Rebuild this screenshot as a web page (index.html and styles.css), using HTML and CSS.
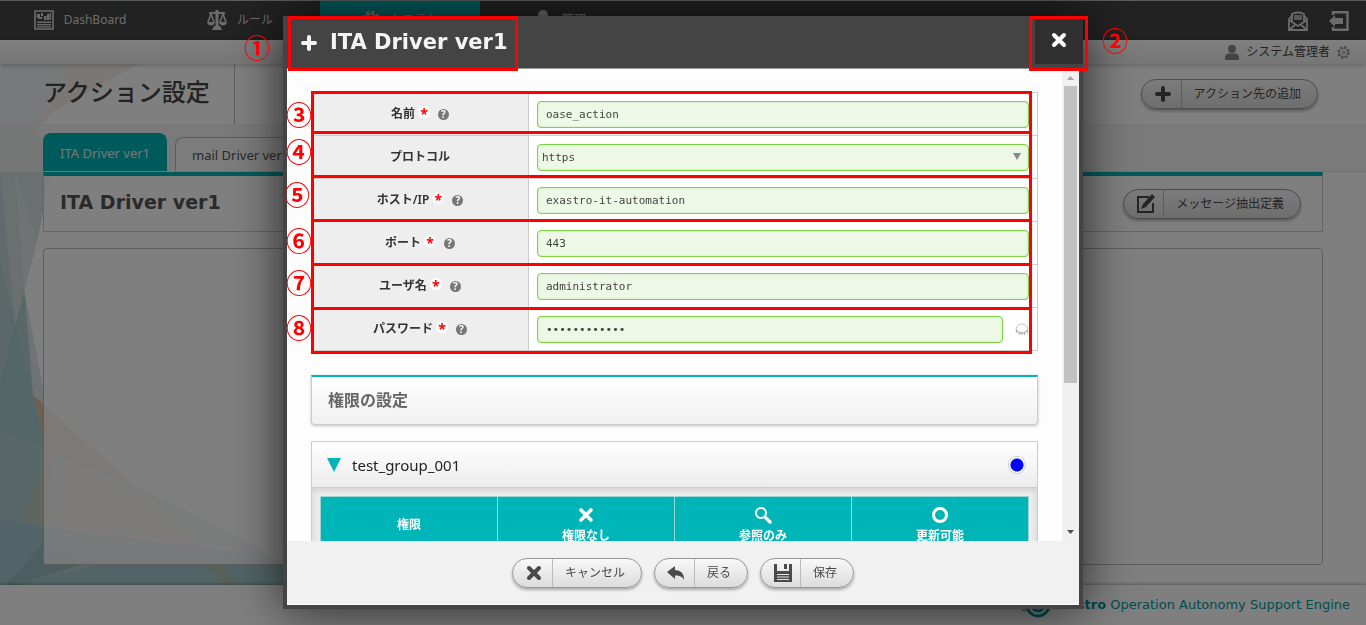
FILE: index.html
```html
<!DOCTYPE html>
<html lang="ja">
<head>
<meta charset="utf-8">
<title>アクション設定</title>
<link rel="stylesheet" href="styles.css">
</head>
<body>
<svg class="backdrop" viewBox="0 0 300 585" width="300" height="585" aria-hidden="true">
  <path fill="#eef4f4" d="M0 64h62v38L0 172z"/>
  <path fill="#f7eee8" d="M62 64h76l-40 22-65 38 30-35z"/>
  <path fill="#e9efef" d="M0 124h33l22 48H0z"/>
  <path fill="#b3ced2" d="M0 172h51L37 240l-13 50 20 105v170h239l17 6v14H0z"/>
  <path fill="#d4dfe1" d="M0 172h51L37 240 0 385z"/>
  <path fill="#dfe7e9" d="M15 172l22 68-13 50 20 105v54l-11-54z"/>
  <path fill="#b4cfd3" d="M0 262l15 58L0 385z"/>
  <path fill="#b8cfd3" d="M0 172l15 150-15 63z" opacity=".6"/>
  <path fill="#a6cfd1" d="M15 322l18 73 11 42v12L0 430v-45z"/>
  <path fill="#ddc0a0" d="M33 395l125 112 52 42 20 16H44V437z"/>
  <path fill="#b1cfd5" d="M0 430l44 19v16l-22 57-22-4z"/>
  <path fill="#bdcdbf" d="M44 465v62l-22-5z"/>
  <path fill="#c8dcdc" d="M55 455l90 35 155 80v15H44z"/>
  <path fill="#dcd2c4" d="M65 458l90 47 55 50-150-28z"/>
  <path fill="#a4c9ce" d="M0 518l44 10 190 23 66 14v20H0z"/>
  <path fill="#98bfc0" d="M44 543L5 585h15l80-24z"/>
  <path fill="#bfd3c8" d="M15 585l85-26 50-8z" opacity=".7"/>
  <path fill="#adc2b8" d="M206 565h16l20 20h-23z"/>
</svg>

<header class="topnav">
  <nav class="topnav-menu">
    <a class="topnav-item" href="#dashboard">
      <svg width="20" height="20" viewBox="0 0 20 20"><path fill="none" stroke="currentColor" stroke-width="1.6" d="M1 1h18v18H1z"/><path fill="currentColor" d="M3 4h3v3h3A3 3 0 1 1 3 4zM7 3h2v3H7zM10 6h2.500v4H10zM13 4h2v6h-2zM15.500 3H17v7h-1.500zM3 11.500h14v1.500H3zM3 14h14v1.300H3zM3 16.300h14v1.200H3z"/></svg>
      <span>DashBoard</span>
    </a>
    <a class="topnav-item" href="#rule">
      <svg width="20" height="20" viewBox="0 0 20 20"><g fill="none" stroke="currentColor" stroke-width="1.600"><path stroke-width="2.200" d="M2 3.500q4-1.500 8 0 4-1.500 8 0"/><path d="M4 4L1 12M4 4l3 8M16 4l-3 8M16 4l3 8"/><path stroke-width="3" d="M10 0v17"/></g><path fill="currentColor" d="M0 12h8q-1 3.500-4 3.500T0 12zM12 12h8q-1 3.500-4 3.500T12 12zM7 16h6l2 4H5z"/></svg>
      <span>ルール</span>
    </a>
    <a class="topnav-item topnav-active" href="#system">
      <svg width="18" height="20" viewBox="0 0 18 20"><circle cx="9" cy="9" r="7" fill="none" stroke="currentColor" stroke-width="3" stroke-dasharray="3.500 2"/><circle cx="9" cy="9" r="5" fill="none" stroke="currentColor" stroke-width="2"/></svg>
      <span>システム</span>
    </a>
    <a class="topnav-item" href="#admin">
      <svg width="18" height="20" viewBox="0 0 18 20"><circle cx="9" cy="5" r="5" fill="currentColor"/><path fill="currentColor" d="M0 20v-4q0-5 9-5t9 5v4z"/></svg>
      <span>管理</span>
    </a>
  </nav>
  <div class="topnav-tools">
    <a href="#mail" aria-label="メール"><svg width="20" height="20" viewBox="0 0 20 20"><g fill="none" stroke="currentColor" stroke-width="1.800"><path d="M4 5L1 8v11h18V8l-3-3"/><path d="M4 11V3q6-3 12 0v8M1 9l9 6 9-6M1 19l7-6M19 19l-7-6"/></g><path fill="currentColor" opacity=".7" d="M6 4h8v5H6z"/></svg></a>
    <a href="#logout" aria-label="ログアウト"><svg width="20" height="20" viewBox="0 0 20 20"><path fill="none" stroke="currentColor" stroke-width="2.400" d="M4 4V1.200h14.500v17.600H4V16"/><path fill="currentColor" d="M0 10l6-6v3h8v6H6v3z"/></svg></a>
  </div>
</header>

<div class="userbar">
  <svg width="14" height="15" viewBox="0 0 14 15"><circle cx="7" cy="4" r="4" fill="#888"/><path fill="#888" d="M0 15v-3q0-3 4-3.500h6q4 .5 4 3.500v3z"/></svg>
  <a href="#user">システム管理者</a>
  <svg width="13" height="13" viewBox="0 0 13 13"><circle cx="6.500" cy="6.500" r="5.500" fill="none" stroke="#888" stroke-width="1.500" stroke-dasharray="2.300 2"/><circle cx="6.500" cy="6.500" r="4.300" fill="none" stroke="#888"/><circle cx="6.500" cy="6.500" r="1.500" fill="none" stroke="#888"/></svg>
</div>

<div class="titlebar">
  <h1>アクション設定</h1>
  <button class="pill" type="button">
    <span class="pill-icon"><svg width="18" height="18" viewBox="0 0 18 18"><path stroke="currentColor" stroke-width="4" stroke-linecap="round" d="M9 3v12M3 9h12"/></svg></span>
    <span class="pill-text">アクション先の追加</span>
  </button>
</div>

<nav class="tabs">
  <a class="tab tab-active" href="#ita">ITA Driver ver1</a>
  <a class="tab" href="#mail-driver">mail Driver ver1</a>
</nav>

<main class="main">
  <section class="driver-head">
    <h2>ITA Driver ver1</h2>
    <button class="pill" type="button">
      <span class="pill-icon"><svg width="20" height="20" viewBox="0 0 20 20"><path fill="none" stroke="currentColor" stroke-width="2" d="M13 3H2v15h15V9"/><path fill="currentColor" d="M16 0l3 3-9 10-5 2 2-5z"/></svg></span>
      <span class="pill-text">メッセージ抽出定義</span>
    </button>
  </section>
  <section class="driver-panel"></section>
</main>

<footer class="footer">
  <svg width="34" height="30" viewBox="0 0 34 30"><g fill="none" stroke="currentColor" stroke-width="3"><circle cx="21" cy="15" r="11"/><circle cx="21" cy="15" r="6"/></g><circle cx="7" cy="19" r="2" fill="none" stroke="currentColor"/></svg>
  <p><strong>Exastro</strong> Operation Autonomy Support Engine</p>
</footer>

<div class="overlay">
  <div class="modal" role="dialog" aria-labelledby="modal-title">
    <header class="modal-head">
      <h2 id="modal-title">
        <svg width="18" height="18" viewBox="0 0 18 18"><path stroke="currentColor" stroke-width="4" stroke-linecap="round" d="M9 3v12M3 9h12"/></svg>
        ITA Driver ver1
      </h2>
      <button class="modal-close" type="button" aria-label="閉じる"><svg width="18" height="18" viewBox="0 0 18 18"><path stroke="currentColor" stroke-width="4" stroke-linecap="round" d="M4 4l10 10M14 4L4 14"/></svg></button>
    </header>

    <div class="modal-body">
      <div class="modal-content">
        <table class="form-table">
          <tr><th><label for="f-name">名前</label><i class="req">*</i><i class="help">?</i></th><td><input id="f-name" type="text" value="oase_action"></td></tr>
          <tr><th><label for="f-protocol">プロトコル</label></th><td><div class="select-wrap"><select id="f-protocol"><option>https</option></select></div></td></tr>
          <tr><th><label for="f-host">ホスト/IP</label><i class="req">*</i><i class="help">?</i></th><td><input id="f-host" type="text" value="exastro-it-automation"></td></tr>
          <tr><th><label for="f-port">ポート</label><i class="req">*</i><i class="help">?</i></th><td><input id="f-port" type="text" value="443"></td></tr>
          <tr><th><label for="f-user">ユーザ名</label><i class="req">*</i><i class="help">?</i></th><td><input id="f-user" type="text" value="administrator"></td></tr>
          <tr><th><label for="f-pass">パスワード</label><i class="req">*</i><i class="help">?</i></th><td><div class="pass-row"><input id="f-pass" type="password" value="password1234"><svg width="14" height="12" viewBox="0 0 14 12"><path fill="none" stroke="#c4c4c4" d="M1 6q1-5 6-5t6 5"/><path fill="none" stroke="#b4b4b4" stroke-width="1.300" d="M1 6q2 4 6 4t6-4M2 8L1 10M5 9.500L4 12M7 10v2M9 9.500l1 2.500M12 8l1 2"/></svg></div></td></tr>
        </table>

        <h3 class="section-title">権限の設定</h3>

        <section class="group">
          <div class="group-head">
            <svg width="14" height="14" viewBox="0 0 14 14"><path fill="#00b5b8" d="M0 0h14L7 14z"/></svg>
            <span>test_group_001</span>
            <i class="group-dot"></i>
          </div>
          <div class="group-body">
            <table class="perm-table">
              <tr>
                <th>権限</th>
                <th><svg width="18" height="18" viewBox="0 0 18 18"><path stroke="currentColor" stroke-width="3.600" stroke-linecap="round" d="M4 4l10 10M14 4L4 14"/></svg>権限なし</th>
                <th><svg width="18" height="18" viewBox="0 0 18 18"><circle cx="7" cy="7" r="5" fill="none" stroke="currentColor" stroke-width="2"/><path stroke="currentColor" stroke-width="3.400" stroke-linecap="round" d="M12 12l4 4"/></svg>参照のみ</th>
                <th><svg width="18" height="18" viewBox="0 0 18 18"><circle cx="9" cy="9" r="6.500" fill="none" stroke="currentColor" stroke-width="3"/></svg>更新可能</th>
              </tr>
            </table>
          </div>
        </section>
      </div>
      <div class="scrollbar">
        <svg width="17" height="17" viewBox="0 0 17 17"><path fill="#a3a3a3" d="M5 11h7l-3.500-4z"/></svg>
        <i class="scroll-thumb"></i>
        <svg class="scroll-down" width="17" height="17" viewBox="0 0 17 17"><path fill="#505050" d="M5 6h7l-3.500 4z"/></svg>
      </div>
    </div>

    <footer class="modal-foot">
      <button class="pill" type="button">
        <span class="pill-icon"><svg width="18" height="18" viewBox="0 0 18 18"><path stroke="currentColor" stroke-width="4" stroke-linecap="round" d="M4 4l10 10M14 4L4 14"/></svg></span>
        <span class="pill-text">キャンセル</span>
      </button>
      <button class="pill" type="button">
        <span class="pill-icon"><svg width="18" height="18" viewBox="0 0 18 18"><path fill="currentColor" d="M0 8l8-6v4q9 0 9 10-2-5-9-4.500V15z"/></svg></span>
        <span class="pill-text">戻る</span>
      </button>
      <button class="pill" type="button">
        <span class="pill-icon"><svg width="18" height="18" viewBox="0 0 18 18"><path fill="currentColor" fill-rule="evenodd" d="M0 0h3v7h12V0h3v18H0zM3 10h12v1H3zM3 12.500h12v1H3zM3 15h12v1H3z"/><path fill="currentColor" d="M10 0h3v5h-3z"/></svg></span>
        <span class="pill-text">保存</span>
      </button>
    </footer>

    <i class="mark mark-title"></i>
    <i class="mark mark-close"></i>
    <i class="mark mark-row row-1"></i>
    <i class="mark mark-row row-2"></i>
    <i class="mark mark-row row-3"></i>
    <i class="mark mark-row row-4"></i>
    <i class="mark mark-row row-5"></i>
    <i class="mark mark-row row-6"></i>
    <span class="num num-1">①</span>
    <span class="num num-2">②</span>
    <span class="num num-3">③</span>
    <span class="num num-4">④</span>
    <span class="num num-5">⑤</span>
    <span class="num num-6">⑥</span>
    <span class="num num-7">⑦</span>
    <span class="num num-8">⑧</span>
  </div>
</div>
</body>
</html>
```
FILE: styles.css
```css
* { box-sizing: border-box; }

body {
  margin: 0;
  height: 100vh;
  display: flex;
  flex-direction: column;
  position: relative;
  overflow: hidden;
  background: #fff;
  color: #444;
  font: 12px/16px "Noto Sans", "Noto Sans CJK JP", sans-serif;
}

h1, h2, h3, p { margin: 0; }
a { color: inherit; text-decoration: none; }
i { font-style: normal; }
svg { display: block; flex: none; }

.backdrop { position: absolute; left: 0; top: 0; z-index: -1; }

/* top navigation */
.topnav {
  height: 40px;
  flex: none;
  display: flex;
  justify-content: space-between;
  border-top: 1px solid #b4bcbc;
  background: #444;
  color: #d8d8d8;
  font-size: 12px;
}
.topnav-menu { display: flex; }
.topnav-item {
  width: 160px;
  display: flex;
  align-items: center;
  justify-content: center;
  gap: 10px;
  padding-bottom: 2px;
}
.topnav-active { background: #00b5b8; }
.topnav-tools { display: flex; align-items: center; gap: 21px; padding-right: 17px; }

.userbar {
  height: 24px;
  flex: none;
  display: flex;
  align-items: center;
  justify-content: flex-end;
  gap: 7px;
  padding-right: 16px;
  background: linear-gradient(#fff, #ececec);
  box-shadow: 0 1px 5px rgba(0, 0, 0, .25);
}

.titlebar {
  height: 61px;
  flex: none;
  display: flex;
  align-items: center;
  justify-content: space-between;
  padding: 0 48px 0 43px;
  border-bottom: 1px solid #eee;
}
.titlebar h1 {
  align-self: stretch;
  padding-right: 24px;
  border-right: 1px solid #bbb;
  font-size: 24px;
  font-weight: 500;
  line-height: 56px;
}

.tabs {
  height: 47px;
  flex: none;
  display: flex;
  align-items: flex-end;
  gap: 8px;
  padding: 0 43px;
  border-bottom: 1px solid #e8e8e8;
  background: rgba(236, 236, 236, .5);
  font-size: 13px;
}
.tab {
  height: 34px;
  padding: 0 16px;
  border: 1px solid #bbb;
  border-bottom: 0;
  border-radius: 8px 8px 0 0;
  background: #f8f8f8;
  color: #555;
  line-height: 34px;
}
.tab-active {
  height: 38px;
  border-color: #00b5b8;
  background: #00b5b8;
  color: #eee;
  line-height: 38px;
}

.main {
  flex: 1;
  display: flex;
  flex-direction: column;
  gap: 16px;
  padding: 0 43px 20px;
}
.driver-head {
  height: 60px;
  display: flex;
  align-items: center;
  justify-content: space-between;
  padding: 0 21px 0 16px;
  border: 1px solid #ccc;
  border-top: 4px solid #00b5b8;
  background: rgba(255, 255, 255, .8);
}
.driver-head h2 { font: bold 19px/24px "DejaVu Sans", sans-serif; color: #555; padding-bottom: 4px; }
.driver-panel {
  flex: 1;
  border: 1px solid #bbb;
  border-radius: 4px;
  background: rgba(255, 255, 255, .8);
}

.footer {
  height: 40px;
  flex: none;
  display: flex;
  align-items: center;
  justify-content: flex-end;
  padding-right: 16px;
  background: #fff;
  box-shadow: 0 -1px 3px rgba(0, 0, 0, .3);
  color: #00999c;
  font: 13px/16px "DejaVu Sans", sans-serif;
}

/* pill buttons */
.pill {
  height: 30px;
  display: flex;
  align-items: stretch;
  padding: 0;
  border: 1px solid #999;
  border-radius: 15px;
  background: linear-gradient(#f8f8f8, #dcdcdc);
  box-shadow: 0 2px 3px rgba(0, 0, 0, .3);
  color: #4a4a4a;
  font: inherit;
}
.pill-icon {
  width: 40px;
  display: flex;
  align-items: center;
  justify-content: center;
  padding-left: 4px;
  border-right: 1px solid #bbb;
}
.pill-text { padding: 0 16px 0 12px; line-height: 27px; }

/* dialog */
.overlay {
  position: fixed;
  inset: 0;
  z-index: 10;
  display: flex;
  justify-content: center;
  padding: 16px 0;
  background: rgba(0, 0, 0, .5);
}
.modal {
  position: relative;
  width: 800px;
  display: flex;
  flex-direction: column;
  border: solid #444;
  border-width: 0 4px 4px;
  background: #fdfdfd;
  box-shadow: 0 0 48px rgba(0, 0, 0, .7);
}
.modal-head {
  height: 53px;
  flex: none;
  display: flex;
  align-items: flex-start;
  justify-content: space-between;
  background: #444;
  border-bottom: 1px solid #999;
}
.modal-head h2 {
  display: flex;
  align-items: center;
  gap: 12px;
  padding-left: 13px;
  color: #f4f4f4;
  font: bold 21px/53px "DejaVu Sans", sans-serif;
}
.modal-close {
  width: 48px;
  height: 48px;
  display: flex;
  align-items: center;
  justify-content: center;
  margin-right: -4px;
  padding: 0;
  border: 0;
  background: #303030;
  color: #fff;
}
.modal-body { flex: 1; min-height: 0; display: flex; overflow: hidden; }
.modal-content { flex: 1; padding: 23px 24px 0; }

.form-table {
  width: 100%;
  border-collapse: collapse;
  table-layout: fixed;
  background: #fff;
}
.form-table tr { height: 43px; }
.form-table th, .form-table td { border: 1px solid #ccc; padding: 0 8px; }
.form-table th { width: 217px; background: #eee; color: #333; font-weight: 600; }
.form-table th > * { display: inline-block; vertical-align: middle; }
.req {
  width: 12px;
  height: 12px;
  margin: 0 0 4px 3px;
  border-radius: 6px;
  background: #fff;
  color: #f00;
  font-size: 14px;
  font-weight: bold;
  line-height: 16px;
}
.help {
  width: 11px;
  height: 11px;
  margin-left: 8px;
  border-radius: 6px;
  background: #777;
  color: #fff;
  font-size: 10px;
  font-weight: bold;
  line-height: 11px;
}
.form-table input, .form-table select {
  display: block;
  width: 100%;
  height: 27px;
  padding: 0 8px;
  border: 1px solid #7fd244;
  border-radius: 4px;
  background: #edf8e7;
  box-shadow: inset 0 0 2px #b5e394;
  color: #444;
  font: 11px "DejaVu Sans Mono", monospace;
}
.form-table select { appearance: none; padding: 0 4px; }
.select-wrap { position: relative; }
.select-wrap::after {
  content: "";
  position: absolute;
  right: 8px;
  top: 9px;
  border: solid transparent;
  border-width: 7px 4px 0;
  border-top-color: #888;
}
.pass-row { display: flex; align-items: center; gap: 12px; }

.section-title {
  height: 50px;
  margin: 24px 0 16px;
  padding-left: 16px;
  border: 1px solid #ccc;
  border-top: 2px solid #00b5b8;
  border-radius: 0 0 4px 4px;
  background: linear-gradient(#fff, #f0f0f0);
  box-shadow: 0 1px 3px rgba(0, 0, 0, .25);
  color: #666;
  font-size: 16px;
  font-weight: bold;
  line-height: 46px;
}
.group { border: 1px solid #ccc; background: #ececec; }
.group-head {
  height: 46px;
  display: flex;
  align-items: center;
  gap: 11px;
  padding: 0 11px 0 15px;
  border-bottom: 1px solid #ccc;
  background: linear-gradient(#fff, #ececec);
  color: #222;
  font-size: 15px;
}
.group-dot {
  width: 18px;
  height: 18px;
  margin-left: auto;
  border: 1px solid #ccc;
  border-radius: 9px;
  background: radial-gradient(#00f 6px, #fff 7px);
}
.group-body { padding: 8px; box-shadow: inset 0 2px 6px rgba(0, 0, 0, .12); }
.perm-table {
  width: 100%;
  border-collapse: collapse;
  table-layout: fixed;
  background: #00b5b8;
  color: #fff;
}
.perm-table th { height: 55px; padding: 2px 0 0; border: 1px solid #9fd4d5; font-weight: bold; }
.perm-table svg { margin: 0 auto 4px; }

.scrollbar {
  width: 17px;
  display: flex;
  flex-direction: column;
  align-items: center;
  background: #f0f0f0;
}
.scroll-thumb { width: 13px; height: 297px; background: #c1c1c1; }
.scroll-down { margin-top: auto; }

.modal-foot {
  height: 64px;
  flex: none;
  display: flex;
  align-items: center;
  justify-content: center;
  gap: 12px;
  border-bottom: 1px solid #fff;
  background: #f1f1f1;
}

/* annotation frames and numbers lying over the dialog */
.mark { position: absolute; border: 3px solid #f00; }
.mark-title { left: 1px; top: 0; width: 230px; height: 55px; }
.mark-close { right: -9px; top: 0; width: 59px; height: 55px; }
.mark-row { left: 24px; right: 47px; height: 47px; }
.row-1 { top: 75px; height: 43px; }
.row-2 { top: 115px; }
.row-3 { top: 159px; }
.row-4 { top: 203px; }
.row-5 { top: 247px; }
.row-6 { top: 291px; }
.num {
  position: absolute;
  left: -1px;
  width: 26px;
  color: #f00;
  font: 700 26px/26px "Noto Sans CJK JP", sans-serif;
  text-align: center;
}
.num-1 { left: -43px; top: 18px; }
.num-2 { left: 815px; top: 11px; }
.num-3 { top: 85px; }
.num-4 { top: 122px; }
.num-5 { left: -3px; top: 165px; }
.num-6 { top: 211px; }
.num-7 { top: 253px; }
.num-8 { top: 298px; }
```
